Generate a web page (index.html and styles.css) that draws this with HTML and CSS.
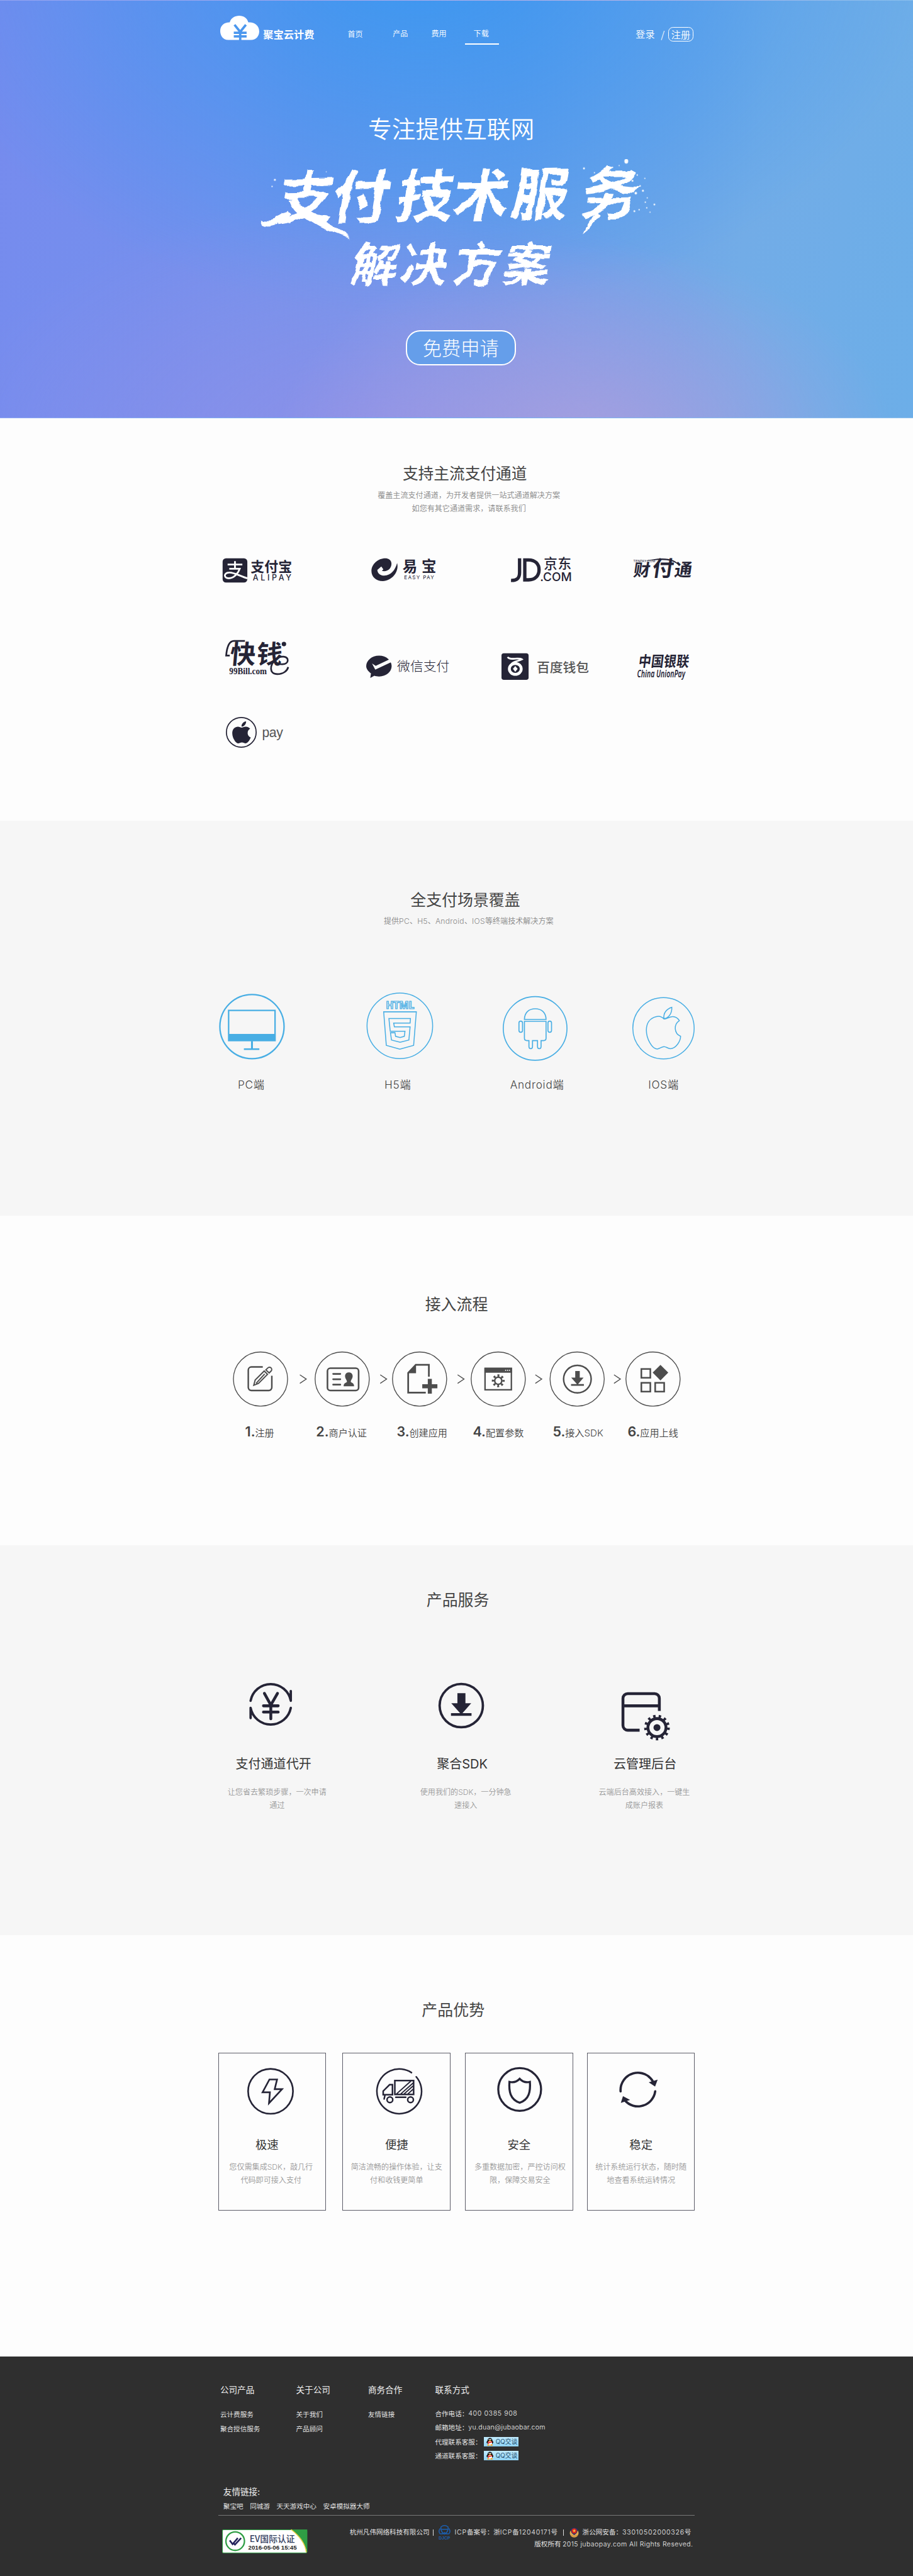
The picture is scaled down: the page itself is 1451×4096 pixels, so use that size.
FILE: index.html
```html
<!DOCTYPE html>
<html lang="zh-CN">
<head>
<meta charset="utf-8">
<title>聚宝云计费</title>
<link rel="stylesheet" href="styles.css">
</head>
<body>
<section class="hero">
  <header class="header">
    <svg class="header-logo" viewBox="463 33 82 51"><path fill="#fff" d="M480 84C468 84 463 74 463 65C463 54 471 47 483 47C485 38 494 33 503 33S520 38 522 47C535 46 545 54 545 66C545 76 538 84 528 84Z"/><path d="M493 52L505 67L517 52M505 67V85M491.500 69H518.500M491.500 76.500H518.500" fill="none" stroke="#4b97ee" stroke-width="5"/></svg>
    <strong class="brand">聚宝云计费</strong>
    <nav class="nav"><a class="nav-home">首页</a><a>产品</a><a>费用</a><a class="active">下载</a></nav>
    <div class="account"><a>登录</a><i>/</i><a class="signup">注册</a></div>
  </header>
  <p class="lead">专注提供互联网</p>
  <svg class="slogan" viewBox="520 320 900 300">
    <defs><filter id="brush" x="-5%" y="-10%" width="110%" height="120%"><feTurbulence type="fractalNoise" baseFrequency="0.03" numOctaves="2" seed="7" result="n"/><feDisplacementMap in="SourceGraphic" in2="n" scale="13" xChannelSelector="R" yChannelSelector="G"/></filter></defs>
    <g fill="#fff" filter="url(#brush)">
      <text transform="translate(0 416) rotate(-1) skewX(-10)" font-size="120" font-weight="700" y="56" x="586 702 838 955 1080 1226">支付技术服务</text>
      <text transform="translate(0 554) skewX(-10)" font-size="98" font-weight="700" y="38" x="742 845 956 1062">解决方案</text>
      <path d="M650 446C680 466 712 478 737 502C704 492 662 474 642 456ZM547 460C564 468 584 464 608 442L614 448C588 476 562 482 550 472ZM1262 455C1250 472 1240 482 1228 490C1236 472 1244 462 1252 450Z"/>
    </g>
    <g fill="#fff"><ellipse cx="1317" cy="339" rx="4" ry="5"/><circle cx="1228" cy="354" r="2"/><circle cx="1288" cy="352" r="1.500"/><circle cx="1302" cy="348" r="1.200"/><circle cx="1326" cy="361" r="1.800"/><circle cx="1340" cy="368" r="1.500"/><circle cx="1356" cy="375" r="1.200"/><circle cx="1330" cy="380" r="2"/><circle cx="1319" cy="371" r="1.500"/><circle cx="1346" cy="391" r="1.600"/><circle cx="1352" cy="401" r="2"/><circle cx="1337" cy="406" r="2.600"/><circle cx="1361" cy="416" r="1.200"/><circle cx="1357" cy="425" r="1.500"/><circle cx="1376" cy="430" r="1.800"/><circle cx="1344" cy="441" r="1.500"/><circle cx="1334" cy="444" r="1.800"/><circle cx="1367" cy="446" r="1.200"/><circle cx="1360" cy="437" r="1.500"/><circle cx="1275" cy="357" r="1.300"/><circle cx="1250" cy="363" r="1.300"/><circle cx="578" cy="378" r="2"/><circle cx="572" cy="392" r="1.500"/><circle cx="641" cy="389" r="1.500"/><circle cx="686" cy="361" r="1"/></g>
  </svg>
  <a class="apply">免费申请</a>
</section>

<section class="channels">
  <h2>支持主流支付通道</h2>
  <p class="sub">覆盖主流支付通道，为开发者提供一站式通道解决方案<br>如您有其它通道需求，请联系我们</p>
  <div class="logos">
    <svg viewBox="467 1170 303 60">
      <rect x="468" y="1175" width="52" height="51" rx="7"/><path d="M478.500 1188H509.500M494 1181V1197M482 1197H504C501 1206 492 1217 481 1217C470 1217 470 1205.500 481 1205C492 1204 505 1213 520 1217" fill="none" stroke="#fff" stroke-width="3.800"/>
      <text x="527" y="1203.500" font-size="29" font-weight="700" textLength="87">支付宝</text>
      <text class="en" x="531.500" y="1222" font-size="16.500" font-weight="500" textLength="81">ALIPAY</text>
    </svg>
    <svg viewBox="770 1170 285 60">
      <path d="M835 1185C840 1205 822 1223 805 1223C790 1223 781 1213 781 1202C781 1187 795 1175 810 1175C824 1175 826 1188 820 1196C816 1201 810 1203 803 1201.500L806 1198L801.700 1192.300L793.300 1199.300C794 1207 800 1211.500 808 1211.500C822 1211 831 1200 835 1185Z"/>
      <text x="846.500 886.500" y="1203.500" font-size="31" font-weight="700">易宝</text>
      <text class="en" x="849.700" y="1219.300" font-size="10.800" textLength="63">EASY PAY</text>
    </svg>
    <svg viewBox="1055 1170 275 60">
      <path d="M1093 1175V1205C1093 1217 1087 1222 1075 1221.500M1104 1178.300H1112C1126 1178.300 1134 1187 1134 1199S1126 1220.300 1112 1220.300H1104Z" fill="none" stroke="#252436" stroke-width="7"/>
      <text x="1144" y="1197" font-size="28.500" font-weight="500" textLength="58">京东</text>
      <text class="en" x="1136" y="1222.500" font-size="25" font-weight="500" textLength="67" lengthAdjust="spacingAndGlyphs">.COM</text>
    </svg>
    <svg viewBox="1330 1170 131 60">
      <path d="M1357 1181C1385 1172 1423 1172 1429 1192C1419 1177 1390 1176 1357 1181Z"/>
      <text transform="translate(0 1213) skewX(-8)" x="1331 1370 1417" y="0 0 0" font-weight="700"><tspan font-size="35">财</tspan><tspan font-size="45">付</tspan><tspan font-size="37">通</tspan></text>
      <text class="en" x="1332" y="1183" font-size="6.800" textLength="46">TENPAY.COM</text>
    </svg>
    <svg viewBox="467 1345 303 90">
      <text transform="translate(0 1399) skewX(-5)" x="482 538" y="-2" font-size="54" font-weight="700">快钱</text>
      <path d="M515 1349H492C481 1349 477 1362 475.500 1380H483M577 1390C585 1402 605 1400 605 1390C605 1381 590 1379 580 1388C566 1400 566 1419 583 1419C596 1419 604 1412 606 1404" fill="none" stroke="#252436" stroke-width="3.600"/><circle cx="597" cy="1355.700" r="4.700"/>
      <text class="serif" x="482" y="1418.500" font-size="18" font-weight="700" textLength="79" lengthAdjust="spacingAndGlyphs">99Bill.com</text>
    </svg>
    <svg viewBox="770 1345 285 90">
      <path d="M797 1380C812 1380 823.500 1390 823.500 1402S812 1424 797 1424C793 1424 790 1423.500 787 1422.500L778.500 1427L780 1417.500C774 1413 770 1408 770 1402C770 1390 782 1380 797 1380Z"/><path d="M782.300 1396.700L789 1409.500L825 1392.500L818 1388.500L790 1401.700Z" fill="#fff"/>
      <text x="835" y="1413" font-size="27.500" font-weight="300" textLength="110">微信支付</text>
    </svg>
    <svg viewBox="1055 1345 275 90">
      <rect x="1055" y="1375" width="57" height="56" rx="5"/><g fill="none" stroke="#fff"><path d="M1068 1383C1072 1391 1090 1383 1098 1388C1092 1392 1080 1391 1076 1398" stroke-width="3.600"/><ellipse cx="1084" cy="1408" rx="12.500" ry="11.500" stroke-width="6"/></g><path d="M1084 1402L1089 1408L1084 1414L1079 1408Z" fill="#fff"/>
      <text x="1129" y="1415.500" font-size="27.500" font-weight="500" fill="#555" textLength="110">百度钱包</text>
    </svg>
    <svg viewBox="1330 1345 131 90">
      <text transform="translate(0 1403) skewX(-7)" x="1342" y="0" font-size="31" font-weight="700" textLength="106" lengthAdjust="spacingAndGlyphs">中国银联</text>
      <text class="lat" x="1340" y="1425.500" font-size="22" font-weight="600" font-style="italic" textLength="101" lengthAdjust="spacingAndGlyphs">China UnionPay</text>
    </svg>
    <svg viewBox="467 1505 303 73">
      <circle cx="507.300" cy="1541.300" r="31.300" fill="none" stroke="#252436" stroke-width="2.300"/>
      <path transform="translate(487.900 1515) scale(.103)" d="M318.700 268.700c-.2-36.700 16.400-64.400 50-84.800-18.800-26.900-47.200-41.700-84.700-44.600-35.500-2.800-74.300 20.700-88.500 20.700-15 0-49.400-19.700-76.400-19.700C63.300 141.200 4 184.800 4 273.500q0 39.300 14.400 81.200c12.800 36.700 59 126.700 107.200 125.200 25.200-.6 43-17.900 75.800-17.900 31.800 0 48.300 17.900 76.400 17.900 48.600-.7 90.400-82.500 102.600-119.300-65.200-30.700-61.700-90-61.700-91.900zm-56.600-164.200c27.300-32.400 24.800-61.900 24-72.500-24.100 1.400-52 16.400-67.900 34.900-17.500 19.800-27.800 44.300-25.600 71.900 26.100 2 49.900-11.400 69.500-34.300z"/>
      <text class="arial" x="551" y="1551.500" font-size="28" fill="#555" textLength="44">pay</text>
    </svg>
  </div>
</section>

<section class="scenes">
  <h2>全支付场景覆盖</h2>
  <p class="sub">提供<span class="en">PC</span>、<span class="en">H5</span>、<span class="en">Android</span>、<span class="en">IOS</span>等终端技术解决方案</p>
  <div class="scene-grid">
    <figure><svg viewBox="450.500 2085 160 150"><g fill="none" stroke="#48aee4"><circle cx="530.500" cy="2159.500" r="67.500" stroke-width="3"/><path d="M481.400 2175V2125.500H579V2175" stroke-width="3"/><path d="M530.500 2190V2207" stroke-width="4"/><path d="M513.500 2207H546" stroke-width="3.400"/></g><rect x="480" y="2175" width="100.600" height="15.500" fill="#48aee4"/></svg><figcaption class="nudge-pc"><span class="en">PC</span>端</figcaption></figure>
    <figure><svg viewBox="761 2085 160 150"><g fill="none" stroke="#48aee4" stroke-width="2"><circle cx="841" cy="2158" r="69"/><path d="M807 2128.500H875.700L870 2199L841 2207L812.500 2199Z"/><path d="M818 2142.500H863.300L862.600 2152H828L829.500 2160H862.600L860 2187.700L841.600 2192.500L823.400 2187.700L821.300 2172.500H830.800L832 2180L841.600 2182.500L850.400 2180L851.800 2169.500H820.800Z"/><text class="lat" x="811.500" y="2122.500" font-size="20" font-weight="700" stroke-width="1.600" textLength="60" lengthAdjust="spacingAndGlyphs">HTML</text></g></svg><figcaption class="nudge-h5"><span class="en">H5</span>端</figcaption></figure>
    <figure><svg viewBox="1046 2085 160 150"><g fill="none" stroke="#48aee4" stroke-width="2.200"><circle cx="1126" cy="2163.500" r="67"/><path d="M1103.500 2144.500C1103.500 2130 1113 2122 1126.200 2122S1149 2130 1149 2144.500Z"/><path d="M1103.500 2148.500H1149V2184C1149 2187 1147 2189 1144 2189H1138.500V2201C1138.500 2207.500 1131 2207.500 1131 2201V2189H1120.500V2201C1120.500 2207.500 1113 2207.500 1113 2201V2189H1108.500C1105.500 2189 1103.500 2187 1103.500 2184Z"/><rect x="1092" y="2148" width="7.500" height="23.500" rx="3.700"/><rect x="1153" y="2148" width="7.500" height="23.500" rx="3.700"/></g></svg><figcaption class="nudge-and"><span class="en">Android</span>端</figcaption></figure>
    <figure><svg viewBox="1315 2085 160 150"><g fill="none" stroke="#48aee4" stroke-width="2"><circle cx="1395" cy="2163" r="64.500"/><path d="M1396 2143.700C1391 2138 1386 2137 1380 2138.500C1365 2142 1359 2154 1359 2167C1359 2185 1371 2207 1382 2206.700C1388 2206 1391 2201.700 1396 2201.700S1404 2206 1409.500 2206C1421 2206 1431 2190 1431 2180C1417 2174 1416 2155 1428.400 2147C1424 2140 1419 2138 1413.500 2138.500C1406 2139 1401 2144 1396 2143.700ZM1396 2143C1394 2131 1402 2122 1412.500 2119C1413 2131 1407 2141 1396 2143Z"/></g></svg><figcaption><span class="en">IOS</span>端</figcaption></figure>
  </div>
</section>

<section class="process">
  <h2>接入流程</h2>
  <ol class="steps">
    <li><svg viewBox="486 2840 172 124"><circle cx="548.200" cy="2902" r="57"/><path d="M631 2893L644.500 2902L631 2911"/><path stroke-width="3.200" d="M553 2876.500H529a6.500 6.500 0 0 0-6.500 6.500V2919.500a6.500 6.500 0 0 0 6.500 6.500H565.500a6.500 6.500 0 0 0 6.500-6.500V2895"/><path stroke-width="2.600" d="M534 2915L537 2904L556 2885L563 2892L544 2911ZM559.500 2882.500l4-4a4.500 4.500 0 0 1 7 6.500l-4 4ZM539 2911L557 2891"/></svg><p class="n1"><b>1.</b>注册</p></li>
    <li><svg viewBox="658 2840 162 124"><circle cx="720" cy="2902" r="57"/><path d="M800 2893L813.500 2902L800 2911"/><rect x="689" y="2879" width="65.500" height="47" rx="6" stroke-width="3.400"/><path stroke-width="3.600" stroke-linecap="round" d="M701 2891H716M701 2902.300H716M701 2913.700H716"/><path class="solid" d="M734 2888C739.500 2888 742 2891.500 742 2896C742 2901 738 2904 738 2907.500C738 2910 745 2909 745 2917H723C723 2909 730 2910 730 2907.500C730 2904 726 2901 726 2896C726 2891.500 728.500 2888 734 2888Z"/></svg><p class="n2"><b>2.</b>商户认证</p></li>
    <li><svg viewBox="820 2840 166 124"><circle cx="882" cy="2902" r="57"/><path d="M962 2893L975.500 2902L962 2911"/><path stroke-width="3.600" d="M901.500 2897V2872H874L858 2889V2930.500H895"/><path class="solid" d="M857 2889.500L874.500 2871V2889.500Z"/><path stroke-width="8.500" d="M887.600 2917H919.400M903.500 2901.700V2932.700"/></svg><p class="n3"><b>3.</b>创建应用</p></li>
    <li><svg viewBox="986 2840 165 124"><circle cx="1048" cy="2902" r="57"/><path d="M1126 2893L1139.500 2902L1126 2911"/><rect x="1020.200" y="2879.500" width="55.400" height="45" stroke-width="3"/><path class="solid" d="M1019 2878H1077V2888.500H1019Z"/><path stroke="#fff" stroke-width="2" stroke-dasharray="2 2" d="M1062.500 2883.500H1073"/><circle cx="1048" cy="2905.500" r="7.500" stroke-width="3.200"/><circle cx="1048" cy="2905.500" r="11" stroke-width="5" stroke-dasharray="4 4.640" stroke-dashoffset="2"/></svg><p class="n4"><b>4.</b>配置参数</p></li>
    <li><svg viewBox="1151 2840 160 124"><circle cx="1213.500" cy="2902" r="57"/><path d="M1291 2893L1304.500 2902L1291 2911"/><circle cx="1214" cy="2902" r="29" stroke-width="3.200"/><path class="solid" d="M1209.500 2885H1219V2899H1227L1215.500 2912.500H1227.700V2916H1200.700V2912.500H1213L1201 2899H1209.500Z"/></svg><p class="n5"><b>5.</b>接入<span class="en">SDK</span></p></li>
    <li><svg viewBox="1311 2840 124 124"><circle cx="1373" cy="2902" r="57"/><path stroke-width="3.400" d="M1348.400 2880.700H1367.300V2899.300H1348.400ZM1348.400 2909.700H1367.300V2928.300H1348.400ZM1377.500 2909.700H1396.400V2928.300H1377.500Z"/><path class="solid" d="M1388.600 2872L1405 2888.300L1388.600 2904.700L1372.200 2888.300Z"/></svg><p class="n6"><b>6.</b>应用上线</p></li>
  </ol>
</section>

<section class="services">
  <h2>产品服务</h2>
  <div class="service-grid">
    <article><svg viewBox="462.600 3530 240 140"><g fill="none" stroke="#252436" stroke-width="5" stroke-linecap="round" stroke-linejoin="round"><path d="M526.500 3578A43 43 0 0 1 611 3578V3557.500M611 3593A43 43 0 0 1 526.500 3593V3614.500"/><path stroke-width="6" d="M555.500 3562.500L569 3587L583 3562.500M569 3587V3616M553.500 3588.700H584.500M553.500 3601.700H584.500"/></g></svg><h3 class="s1">支付通道代开</h3><p>让您省去繁琐步骤，一次申请<br>通过</p></article>
    <article><svg viewBox="859.500 3530 240 140"><circle cx="969.400" cy="3588.300" r="45.500" fill="none" stroke="#252436" stroke-width="5"/><path fill="#252436" d="M961.300 3562H978.200V3583.300H990.300L972 3604H991V3609.700H947.800V3604H967L948.400 3583.300H961.300Z"/></svg><h3 class="s2">聚合<span class="en">SDK</span></h3><p>使用我们的<span class="en">SDK</span>，一分钟急<br>速接入</p></article>
    <article><svg viewBox="1235 3530 240 140"><g fill="none" stroke="#252436" stroke-width="6"><path d="M1387 3599.500V3573a10 10 0 0 0-10-10H1320.500a10 10 0 0 0-10 10V3630a10 10 0 0 0 10 10H1345.500M1310 3588.700H1387"/><circle cx="1382" cy="3634.500" r="19"/><circle cx="1382" cy="3634.500" r="24" stroke-dasharray="5 6.600"/></g><circle cx="1382" cy="3634.500" r="7.300" fill="#252436"/></svg><h3 class="s3">云管理后台</h3><p>云端后台高效接入，一键生<br>成账户报表</p></article>
  </div>
</section>

<section class="advantages">
  <h2>产品优势</h2>
  <div class="cards">
    <article><svg viewBox="459 4340 227 120"><g fill="none" stroke="#252436" stroke-width="3.500"><circle cx="568.800" cy="4400" r="47.200"/><path d="M566.500 4375H582.500L577.500 4395.500H593L565.500 4425L567.500 4402H552Z"/></g></svg><h3 class="a1">极速</h3><p class="d1">您仅需集成<span class="en">SDK</span>，敲几行<br>代码即可接入支付</p></article>
    <article><svg viewBox="720.500 4340 227 120"><g fill="none" stroke="#252436" stroke-width="3.300" stroke-linecap="round"><path d="M866 4360.700A47 47 0 1 0 876 4369.500"/><path d="M831 4377.500H870.500V4406.500H831ZM826 4386H820L806.500 4399.500V4407H826ZM810 4409L808.500 4416M833 4412.300H854"/><circle cx="820.600" cy="4417.700" r="6"/><circle cx="864" cy="4417.700" r="6"/><path stroke-width="2.600" d="M835 4405L864 4379M844 4405L870 4382M851 4405L869 4389M859 4405L869 4396"/></g></svg><h3>便捷</h3><p>简洁流畅的操作体验，让支<br>付和收钱更简单</p></article>
    <article><svg viewBox="978 4340 227 120"><g fill="none" stroke="#252436" stroke-width="4.300"><circle cx="1093" cy="4396" r="45"/><path d="M1093 4373.500C1088 4379 1080 4382 1071.500 4380C1070 4400 1073 4417 1093 4424C1113 4417 1116 4400 1114.500 4380C1106 4382 1098 4379 1093 4373.500Z"/></g></svg><h3>安全</h3><p class="d3">多重数据加密，严控访问权<br>限，保障交易安全</p></article>
    <article><svg viewBox="1234.500 4340 227 120"><g fill="none" stroke="#252436" stroke-width="4.800" stroke-linecap="round"><path d="M1305 4400A36.500 36.500 0 0 1 1374 4381M1377.800 4400A36.500 36.500 0 0 1 1314 4419"/></g><path fill="#252436" d="M1364.200 4381L1383 4375.300L1377.500 4390ZM1310 4410L1305.500 4424.500L1325 4418Z"/></svg><h3>稳定</h3><p>统计系统运行状态，随时随<br>地查看系统运转情况</p></article>
  </div>
</section>

<footer class="footer">
  <div class="foot-cols">
    <div><h4>公司产品</h4><a>云计费服务</a><a>聚合授信服务</a></div>
    <div><h4>关于公司</h4><a>关于我们</a><a>产品顾问</a></div>
    <div><h4>商务合作</h4><a>友情链接</a></div>
    <div class="contact"><h4>联系方式</h4><p>合作电话：<span class="en phone">400 0385 908</span></p><p>邮箱地址：<span class="en mail">yu.duan@jubaobar.com</span></p>
      <p>代理联系客服：<span class="qq"><svg viewBox="0 0 16 18"><use href="#penguin"/></svg><span class="en">QQ</span>交谈</span></p>
      <p>通道联系客服：<span class="qq"><svg viewBox="0 0 16 18"><g id="penguin"><ellipse cx="8" cy="10" rx="7.500" ry="5"/><ellipse cx="8" cy="7" rx="5.500" ry="6.500"/><ellipse cx="8" cy="12" rx="4.800" ry="4.500" fill="#fff"/><circle cx="6.300" cy="4.300" r="1.400" fill="#fff"/><circle cx="9.700" cy="4.300" r="1.400" fill="#fff"/><ellipse cx="8" cy="7" rx="3" ry="1" fill="#f90"/><path d="M2.500 8Q8 11 13.500 8V10Q8 12.500 6 11.500V14H4V10.500Z" fill="#e31c1c"/><ellipse cx="4.500" cy="16.500" rx="3" ry="1.400" fill="#f90"/><ellipse cx="11.500" cy="16.500" rx="3" ry="1.400" fill="#f90"/></g></svg><span class="en">QQ</span>交谈</span></p></div>
  </div>
  <h4 class="friend-title">友情链接:</h4>
  <div class="friends"><a>聚宝吧</a><a>同城游</a><a>天天游戏中心</a><a>安卓模拟器大师</a></div>
  <div class="foot-bottom">
    <svg class="ev" viewBox="467 5321 179 50"><rect x="467.700" y="5321.700" width="177.600" height="48.600" rx="2" fill="#fff" stroke="#2f9e44" stroke-width="1.400"/><path d="M612 5321H646V5369C640 5350 628 5334 612 5321Z" fill="#2f9e44"/><path d="M612 5321C632 5336 642 5352 644 5369" fill="none" stroke="#f4d03f" stroke-width="2"/><circle cx="494.500" cy="5345.500" r="19.500" fill="none" stroke="#2f9e44" stroke-width="3"/><path d="M483 5344L489 5352L500 5339M491 5350L494 5353L507 5339" fill="none" stroke="#24245c" stroke-width="3.400"/><text x="525" y="5347" font-size="18.500" font-weight="500" fill="#33405e" textLength="95" lengthAdjust="spacingAndGlyphs">EV国际认证</text><text class="arial" x="522" y="5363.500" font-size="13" font-weight="700" fill="#222" textLength="102" lengthAdjust="spacingAndGlyphs">2016-05-06 15:45</text></svg>
    <div class="legal">
      <p class="legal-line"><span>杭州凡伟网络科技有限公司</span><i class="bar b1"></i><svg class="djcp" viewBox="923 5310 25 31"><g fill="none" stroke="#1c5fb0" stroke-width="2"><path d="M928 5314Q935.500 5308 943 5314V5319Q941 5327 935.500 5329Q930 5327 928 5319Z"/><path d="M929 5319H942M926 5317Q922 5324 926 5328Q931 5330 935.500 5326Q940 5330 945 5328Q949 5324 945 5317"/></g><text class="arial" x="923.500" y="5340" font-size="10.500" font-weight="700" fill="#1c5fb0" textLength="24" lengthAdjust="spacingAndGlyphs">DJCP</text></svg><span class="icp"><span class="en">ICP</span>备案号：浙<span class="en">ICP</span>备<span class="en">12040171</span>号</span><i class="bar b2"></i><svg class="police" viewBox="0 0 20 21"><circle cx="10" cy="11.500" r="9.300" fill="#e0ab52"/><path d="M10 0L17.500 3Q18 11 10 16Q2 11 2.500 3Z" fill="#23306f"/><circle cx="10" cy="7" r="5.500" fill="#d9261c"/><path d="M10 3L11 5.500L13.500 5.500L11.500 7.200L12.300 9.800L10 8.300L7.700 9.800L8.500 7.200L6.500 5.500L9 5.500Z" fill="#f5c342"/><path d="M3 16.500Q10 20 17 16.500" stroke="#b9772c" fill="none"/></svg><span class="psb">浙公网安备：<span class="en">33010502000326</span>号</span></p>
      <p class="copy">版权所有 <span class="en">2015 jubaopay.com All Rights Reseved.</span></p>
    </div>
  </div>
</footer>
</body>
</html>
```
FILE: styles.css
```css
/* 1rem = 100 design pixels */
html { font-size: 75.573px; background: #2f2f2f; }
* { box-sizing: border-box; }
body, h2, h3, h4, p, figure, ol { margin: 0; padding: 0; font-weight: 400; }
body { font-family: "Noto Sans CJK SC", "Noto Sans", sans-serif; font-size: .16rem; color: #444; overflow-x: hidden; }
svg { display: block; overflow: visible; }
i { font-style: normal; }
.en { font-family: Inter, "Noto Sans", sans-serif; line-height: 1; }
.lat { font-family: "Noto Sans", sans-serif; }
.arial { font-family: "Liberation Sans", sans-serif; }
.serif { font-family: "Liberation Serif", serif; }

/* hero */
.hero {
  height: 8.8rem; color: #fff; overflow: hidden;
  border-top: 1px solid rgba(255,255,255,.2); border-bottom: 1px solid rgba(255,255,255,.25);
  background:
    radial-gradient(ellipse 34% 50% at 64% 108%, rgba(170,160,222,.9), rgba(170,160,222,0)),
    radial-gradient(ellipse 48% 62% at 42% 108%, rgba(148,142,232,.85), rgba(148,142,232,0)),
    radial-gradient(ellipse 56% 88% at 46% -12%, rgba(58,151,240,1), rgba(58,151,240,0)),
    linear-gradient(98deg, #768bee 0%, #7490ed 24%, #6a9cea 54%, #72ace7 80%, #6caee8 100%);
}
.header { display: flex; align-items: flex-start; height: 1.1rem; padding: .32rem 0 0 4.63rem; }
.header-logo { width: .82rem; height: .51rem; flex: none; }
.brand { margin: .235rem 0 0 .085rem; font-size: .215rem; line-height: .3rem; font-weight: 700; width: 1.08rem; white-space: nowrap; }
.nav { display: flex; margin: .22rem 0 0 .695rem; line-height: .3rem; font-weight: 350; }
.nav a { width: .32rem; white-space: nowrap; position: relative; }
.nav a + a { margin-left: .49rem; }
.nav .nav-home { padding-top: .02rem; }
.nav .nav-home + a { margin-left: .63rem; }
.nav .active { margin-left: .57rem; }
.nav .active::after { content: ""; position: absolute; left: -.18rem; top: .355rem; width: .71rem; height: .025rem; background: #fff; }
.account { display: flex; margin: .22rem 0 0 3.09rem; font-size: .2rem; line-height: .3rem; font-weight: 350; }
.account i { margin: .02rem 0 0 .13rem; }
.account a { white-space: nowrap; }
.account .signup { margin: .02rem 0 0 .07rem; width: .54rem; height: .295rem; line-height: .265rem; text-align: center; border: 1px solid #fff; border-radius: .1rem; }
.lead { margin: 1.265rem 0 0 -.22rem; text-align: center; font-size: .5rem; line-height: .6rem; font-weight: 350; }
.slogan { width: 9rem; height: 3rem; margin: .225rem 0 0 5.2rem; }
.apply { display: block; width: 2.32rem; height: .75rem; margin: .74rem 0 0 8.53rem; border: 2px solid #fff; border-radius: .3rem; background: #659eea; text-align: center; font-size: .4rem; line-height: .67rem; font-weight: 300; }

/* shared section headings */
h2 { font-size: .33rem; line-height: .4rem; text-align: center; color: #444; }
.sub { line-height: .28rem; text-align: center; color: #888; font-weight: 350; }

.channels { height: 8.47rem; padding-top: .94rem; background: #fdfdfd; }
.channels h2 { margin-left: .35rem; font-size: .327rem; }
.channels .sub { margin: .13rem 0 0 .52rem; }
.logos { display: grid; grid-template-columns: 3.03rem 2.85rem 2.75rem 1.31rem; grid-template-rows: 1.75rem 1.6rem .73rem; margin: .87rem 0 0 4.67rem; }
.logos svg { width: 100%; align-self: start; fill: #252436; }

.scenes { height: 8.31rem; padding-top: 1.44rem; background: #f6f6f6; }
.scenes h2 { margin-left: .37rem; }
.scenes .sub { margin: .12rem 0 0 .51rem; }
.scenes .sub .en { letter-spacing: .004rem; }
.scene-grid { display: grid; grid-template-columns: 3.105rem 2.85rem 2.69rem 1.6rem; margin: 1.34rem 0 0 4.505rem; }
figure { width: 1.6rem; }
figure svg { width: 1.6rem; height: 1.5rem; }
figcaption { margin-top: .315rem; text-align: center; font-size: .228rem; line-height: .3rem; font-weight: 350; }
figcaption .en { letter-spacing: .01rem; }
.nudge-pc { margin-left: -.05rem; }
.nudge-h5 { margin-left: -.1rem; }
.nudge-and { margin-left: .06rem; }

.process { height: 6.93rem; padding-top: 1.64rem; background: #fdfdfd; }
.steps { list-style: none; display: grid; grid-template-columns: 1.72rem 1.62rem 1.66rem 1.65rem 1.6rem 1.24rem; margin: .78rem 0 0 4.86rem; }
.steps svg { width: 100%; height: 1.24rem; fill: none; stroke: #4d4d4d; stroke-width: 1.8; }
.steps .solid { fill: #4d4d4d; stroke: none; }
.steps p { width: 1.24rem; margin-top: .293rem; text-align: center; font-size: .2rem; line-height: .4rem; white-space: nowrap; font-weight: 350; }
.steps b { font-family: Inter, "Noto Sans", sans-serif; font-size: .285rem; line-height: 1; font-weight: 600; }
.steps .n1, .steps .n2 { margin-left: -.02rem; }
.steps .n3 { margin-left: .055rem; }
.steps .n5 { margin-left: .025rem; }

.services { height: 8.21rem; padding-top: .925rem; background: #f6f6f6; }
.services h2 { margin-left: .055rem; }
.service-grid { display: grid; grid-template-columns: 3.969rem 3.755rem 2.4rem; margin: 1.465rem 0 0 4.626rem; }
.service-grid article { width: 2.4rem; text-align: center; }
.service-grid svg { width: 2.4rem; height: 1.4rem; }
.service-grid h3 { margin-top: .21rem; font-size: .265rem; line-height: .4rem; color: #333; }
.service-grid .s1, .service-grid .s2 { margin-left: -.15rem; }
.service-grid .s3 { margin-left: .03rem; }
.service-grid p, .cards p { line-height: .28rem; color: #999; font-weight: 350; white-space: nowrap; }
.service-grid p { margin-top: .24rem; }

.advantages { height: 8.86rem; padding-top: 1.35rem; background: #fdfdfd; }
.advantages h2 { margin-left: -.14rem; }
.cards { display: grid; grid-template-columns: 2.615rem 2.575rem 2.565rem 2.27rem; margin: .72rem 0 0 4.59rem; }
.cards article { width: 2.27rem; height: 3.32rem; padding-top: .2rem; text-align: center; border: 1px solid #5c5c68; }
.cards svg { width: 2.27rem; height: 1.2rem; margin-left: -1px; }
.cards h3 { margin-top: .31rem; font-size: .243rem; line-height: .4rem; color: #333; }
.cards p { margin-top: .125rem; }
.cards .a1 { margin-left: -.22rem; }
.cards .d1 { margin-left: -.05rem; }
.cards .d3 { margin-left: .04rem; }

/* footer */
.footer { height: 4.61rem; padding: .54rem 0 0 4.59rem; background: #2f2f2f; color: #f0f0f0; font-size: .14rem; font-weight: 350; overflow: hidden; }
.footer p { font-weight: 350; }
.foot-cols { display: grid; grid-template-columns: 1.596rem 1.514rem 1.41rem 3rem; height: 2.147rem; padding-left: .04rem; }
h4 { font-size: .18rem; line-height: .3rem; }
.foot-cols h4 { margin-bottom: .215rem; }
.foot-cols a { display: block; line-height: .31rem; }
.contact p { display: flex; align-items: center; height: .295rem; white-space: nowrap; }
.contact .en { line-height: .2rem; }
.phone { letter-spacing: .008rem; }
.mail { letter-spacing: .0035rem; }
.legal-line .en { letter-spacing: .01rem; }
.copy .en { letter-spacing: .0055rem; }
.qq { display: flex; align-items: center; width: .73rem; height: .205rem; margin-left: .045rem; background: linear-gradient(#c3ecff, #8fd3f5); color: #23506e; font-size: .13rem; line-height: .2rem; font-weight: 400; }
.qq svg { width: .15rem; height: .17rem; margin: 0 .05rem; flex: none; }
.friend-title { padding-left: .105rem; }
.friends { display: flex; gap: .14rem; margin-top: .043rem; padding-left: .105rem; line-height: .24rem; }
.foot-bottom { display: flex; justify-content: space-between; width: 10.02rem; margin-top: .073rem; border-top: 1px solid #777; }
.ev { width: 1.79rem; height: .5rem; margin: .28rem 0 0 .08rem; flex: none; }
.legal { margin-top: .225rem; padding-right: .035rem; text-align: right; line-height: .25rem; white-space: nowrap; }
.legal-line { display: flex; align-items: center; justify-content: flex-end; height: .25rem; padding-right: .04rem; }
.bar { width: 1px; height: .13rem; background: #ddd; }
.b1 { margin: 0 .11rem 0 .07rem; }
.b2 { margin: 0 .12rem; }
.djcp { width: .25rem; height: .31rem; margin-right: .085rem; }
.police { width: .2rem; height: .21rem; margin-right: .07rem; }
```
